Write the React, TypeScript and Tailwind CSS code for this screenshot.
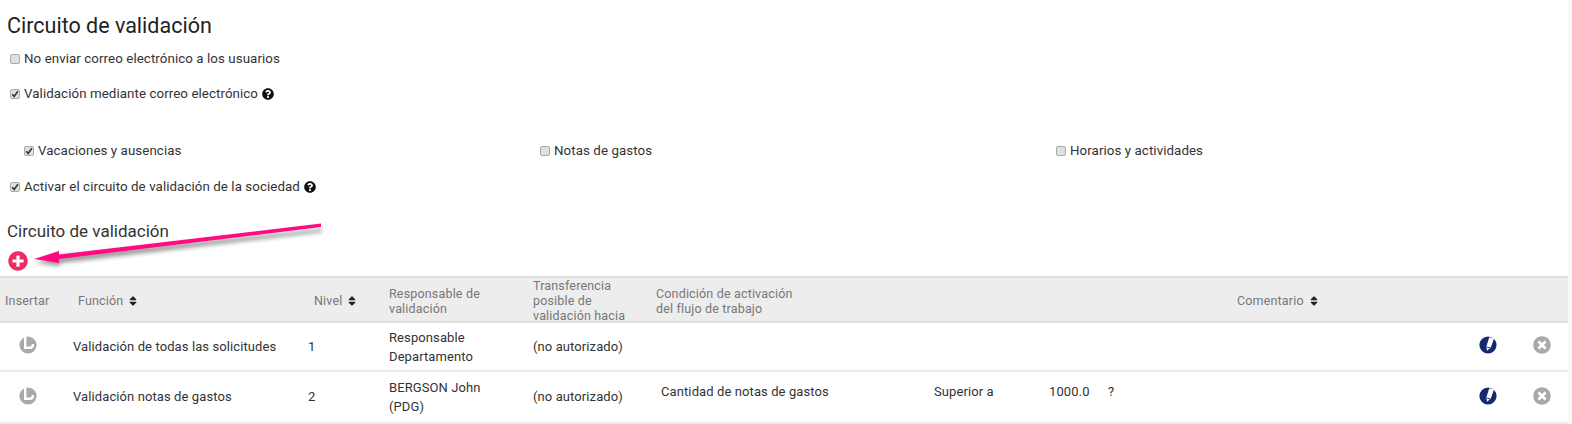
import { FaPlusCircle, FaQuestionCircle, FaSort, FaTimesCircle } from 'react-icons/fa';

const Check = ({ checked }: { checked?: boolean }) => (
    <span className="w-[10px] h-[10px] shrink-0 rounded-[2px] border border-[#aaaaaa] bg-[#e0e0e0] flex items-center justify-center">
        {checked && (
            <svg viewBox="0 0 10 10" className="w-[8px] h-[8px]">
                <path d="M1.5 5.2 L4 8 L8.6 1.6" fill="none" stroke="#333" strokeWidth="2" />
            </svg>
        )}
    </span>
);

const Option = ({ label, checked, help, className }: { label: string; checked?: boolean; help?: boolean; className?: string }) => (
    <label className={'flex items-center gap-[4px] text-[13.33px] leading-[18px] text-[#333] ' + (className || '')}>
        <Check checked={checked} />
        <span className="tracking-[0.07px]">{label}</span>
        {help && <FaQuestionCircle className="text-[12px] text-[#111]" />}
    </label>
);

const InsertIcon = () => (
    <svg viewBox="0 0 18 18" className="w-[18px] h-[18px]">
        <circle cx="9" cy="9" r="8.6" fill="#a9a9a9" />
        <path d="M6.2 1 V11.8 H11 Q13.8 11.8 13.8 9 V8" fill="none" stroke="#fff" strokeWidth="2.4" />
    </svg>
);

const EditIcon = () => (
    <svg viewBox="0 0 18 18" className="w-[18px] h-[18px]">
        <circle cx="9" cy="9" r="8.6" fill="#14296f" />
        <path d="M7.4 10.6 L10.2 1.2 L15 2.4 L11.8 11.6 L8 14.8 Z" fill="#fff" />
        <path d="M7.8 11 L11.6 12" stroke="#14296f" strokeWidth="0.9" />
    </svg>
);

const SortLabel = ({ label }: { label: string }) => (
    <span className="flex items-center gap-[4px]">
        {label}
        <FaSort className="text-[12px] text-[#222]" />
    </span>
);

const rowClass = 'grid grid-cols-[73px_235px_81px_144px_123px_278px_115px_59px_371px_54px_1fr] items-center text-[13px] text-[#333] tracking-[0.1px] border-b-[2px] border-[#ebebeb]';

const Row = ({ name, level, owner, extra, height }: { name: string; level: string; owner: string[]; extra?: string[]; height: string }) => (
    <div className={rowClass + ' ' + height}>
        <div className="pl-[19px] -mt-[3px]"><InsertIcon /></div>
        <div>{name}</div>
        <div>{level}</div>
        <div className="leading-[19px]">
            {owner.map((o) => <div key={o}>{o}</div>)}
        </div>
        <div>(no autorizado)</div>
        <div className="pl-[5px] -mt-[10px]">{extra?.[0]}</div>
        <div className="-mt-[10px]">{extra?.[1]}</div>
        <div className="-mt-[10px]">{extra?.[2]}</div>
        <div className="-mt-[10px]">{extra?.[3]}</div>
        <div className="-mt-[3px]"><EditIcon /></div>
        <div className="-mt-[3px]"><FaTimesCircle className="text-[18px] text-[#a9a9a9]" /></div>
    </div>
);

export default function App() {
    return (
        <div className="relative flex w-[1572px] h-[424px] overflow-hidden bg-white font-['Roboto',sans-serif]">
            <div className="w-[1568px] shrink-0 bg-white">
                <div className="pl-[7px] pt-[13px] text-[21.5px] leading-[26px] text-[#222]">Circuito de validación</div>
                <div className="pl-[10px] mt-[11px]"><Option label="No enviar correo electrónico a los usuarios" /></div>
                <div className="pl-[10px] mt-[17px]"><Option label="Validación mediante correo electrónico" checked help /></div>
                <div className="flex pl-[24px] mt-[39px]">
                    <Option label="Vacaciones y ausencias" checked className="w-[516px]" />
                    <Option label="Notas de gastos" className="w-[516px]" />
                    <Option label="Horarios y actividades" />
                </div>
                <div className="pl-[10px] mt-[18px]"><Option label="Activar el circuito de validación de la sociedad" checked help /></div>
                <div className="pl-[7px] mt-[25px] text-[17px] leading-[20px] text-[#333]">Circuito de validación</div>
                <div className="pl-[8px] mt-[10px] h-[25px]"><FaPlusCircle className="text-[20px] text-[#ee2c62]" /></div>

                <div className="grid grid-cols-[78px_236px_75px_144px_123px_581px_1fr] items-center h-[47px] bg-[#ededed] border-y-[2px] border-[#dfdfdf] text-[12.5px] leading-[15px] text-[#777] tracking-[0.17px]">
                    <div className="pl-[5px]">Insertar</div>
                    <SortLabel label="Función" />
                    <SortLabel label="Nivel" />
                    <div>Responsable de<br />validación</div>
                    <div>Transferencia<br />posible de<br />validación hacia</div>
                    <div>Condición de activación<br />del flujo de trabajo</div>
                    <SortLabel label="Comentario" />
                </div>
                <Row name="Validación de todas las solicitudes" level="1" owner={['Responsable', 'Departamento']} height="h-[49px]" />
                <Row name="Validación notas de gastos" level="2" owner={['BERGSON John', '(PDG)']} extra={['Cantidad de notas de gastos', 'Superior a', '1000.0', '?']} height="h-[52px]" />
            </div>
            <div className="flex-1 bg-[#f8f8f8]" />

            {/* annotation arrow over the page */}
            <svg className="absolute left-0 top-[215px] w-[340px] h-[60px]" viewBox="0 0 340 60">
                <path d="M321 10 L59 37 L34 44 L59 47 L59 44 L321 13 Z" fill="#000" opacity="0.4" transform="translate(1 4)" style={{ filter: 'blur(2px)' }} />
                <path d="M321 8.5 L59 39.5 L59 36 L34 44 L59 48 L59 44 L321 12 Z" fill="#ff0a82" />
            </svg>
        </div>
    );
}
